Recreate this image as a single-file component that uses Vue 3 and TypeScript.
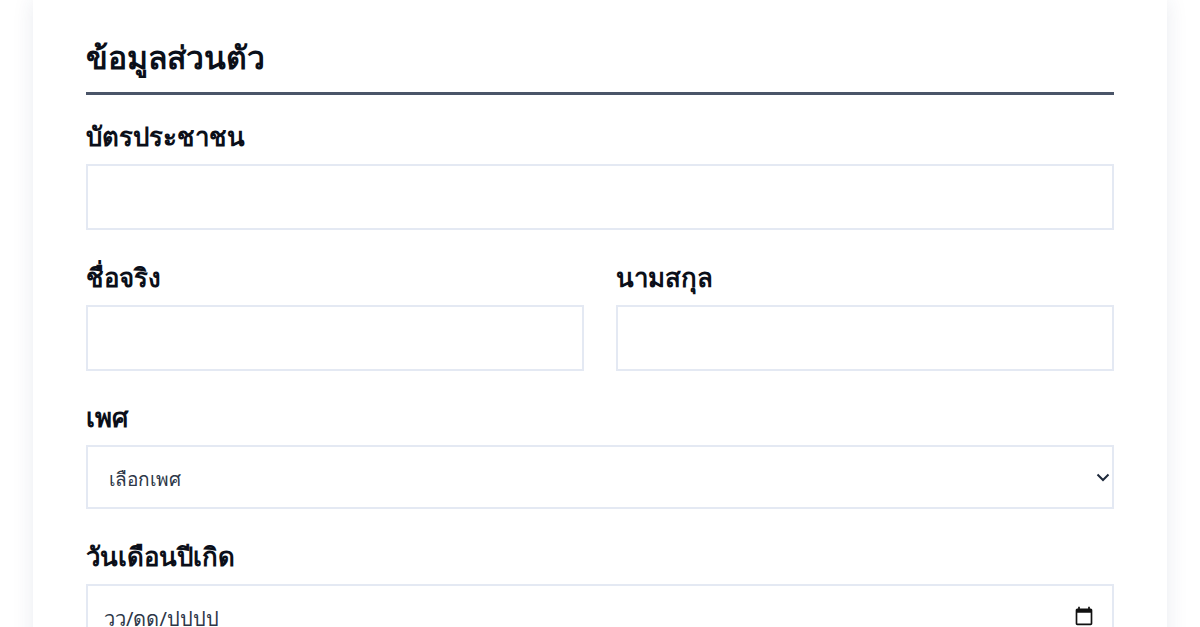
<template>
  <div class="page">
    <form class="card" @submit.prevent>
      <h2 class="section-title">ข้อมูลส่วนตัว</h2>

      <div class="field">
        <label class="field-label">บัตรประชาชน</label>
        <input class="control" type="text" />
      </div>

      <div class="field-row">
        <div class="field">
          <label class="field-label">ชื่อจริง</label>
          <input class="control" type="text" />
        </div>
        <div class="field">
          <label class="field-label">นามสกุล</label>
          <input class="control" type="text" />
        </div>
      </div>

      <div class="field">
        <label class="field-label">เพศ</label>
        <div class="select-wrap">
          <select class="control select" v-model="gender">
            <option value="">เลือกเพศ</option>
            <option value="m">ชาย</option>
            <option value="f">หญิง</option>
          </select>
          <svg class="chevron" width="14" height="9" viewBox="0 0 14 9" fill="none" stroke="#1e293b" stroke-width="2">
            <path d="M1.500 1.500 7 7l5.500-5.500" />
          </svg>
        </div>
      </div>

      <div class="field">
        <label class="field-label">วันเดือนปีเกิด</label>
        <div class="control date">
          <span class="date-text">วว/ดด/ปปปป</span>
          <svg class="date-icon" width="20" height="20" viewBox="0 0 24 24" fill="#111">
            <path d="M20 3h-1V1h-2v2H7V1H5v2H4c-1.100 0-2 .9-2 2v16c0 1.100.9 2 2 2h16c1.100 0 2-.9 2-2V5c0-1.100-.9-2-2-2zm0 18H4V8h16v13z" />
          </svg>
        </div>
      </div>
    </form>
  </div>
</template>

<script setup lang="ts">
import { ref } from 'vue'

const gender = ref<string>('')
</script>

<style>
html,
body {
  margin: 0;
  height: 100%;
  overflow: hidden;
  background: #ffffff;
}
</style>

<style scoped>
.page {
  height: 627px;
  overflow: hidden;
  padding: 0 33px;
  box-sizing: border-box;
  font-family: 'Noto Sans', 'Noto Sans CJK SC', sans-serif;
}

.card {
  background: #ffffff;
  box-shadow: 0 0 20px rgba(40, 60, 110, 0.1);
  padding: 34px 53px 40px;
  min-height: 700px;
  box-sizing: border-box;
}

.section-title {
  margin: 0 0 22px;
  padding-bottom: 12px;
  border-bottom: 3px solid #4a5568;
  font-size: 31.8px;
  line-height: 46px;
  font-weight: 700;
  color: #0b0f19;
}

.field {
  display: flex;
  flex-direction: column;
  flex: 1;
  margin-bottom: 27.7px;
}

.field-row {
  display: flex;
  gap: 32px;
}

.field-label {
  font-size: 25.8px;
  line-height: 38px;
  font-weight: 700;
  color: #0b0f19;
  margin-bottom: 9px;
}

.control {
  display: block;
  width: 100%;
  height: 66px;
  box-sizing: border-box;
  border: 2px solid #e4e9f3;
  background: #fff;
  padding: 0 22px;
  font-family: inherit;
  font-size: 19px;
  color: #2d3748;
  outline: none;
}

.select-wrap {
  position: relative;
}

.select {
  height: 64px;
  padding: 4px 21px 0;
  appearance: none;
  border-radius: 0;
}

.chevron {
  position: absolute;
  right: 4px;
  top: 28px;
  pointer-events: none;
}

.date {
  display: flex;
  align-items: center;
  justify-content: space-between;
  padding: 0 18px 0 16px;
}

.date-text {
  padding-top: 4px;
  font-size: 20px;
  color: #2d3748;
}

.date-icon {
  margin-bottom: 2px;
}
</style>
